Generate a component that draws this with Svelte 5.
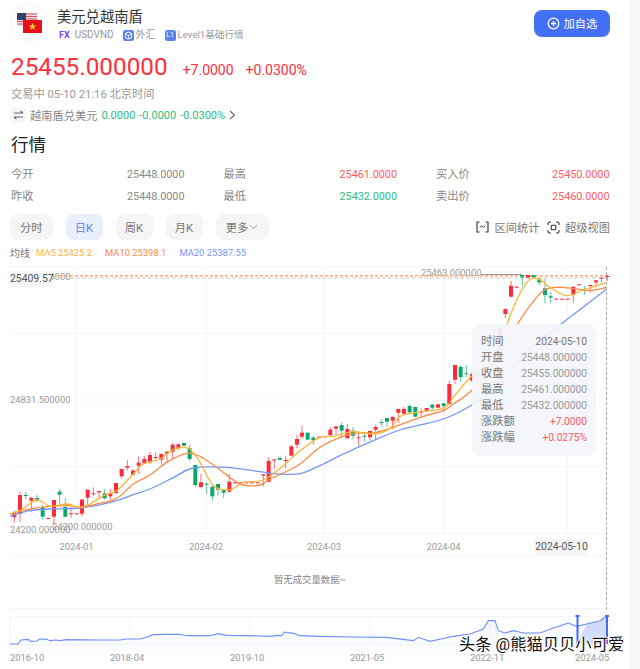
<script>
  const stats = [
    [['今开', '25448.0000', ''], ['最高', '25461.0000', 'up'], ['买入价', '25450.0000', 'up']],
    [['昨收', '25448.0000', ''], ['最低', '25432.0000', 'down'], ['卖出价', '25460.0000', 'up']]
  ]
  const tabs = ['分时', '日K', '周K', '月K']
  const tipRows = [
    ['时间', '2024-05-10', 'dark'],
    ['开盘', '25448.000000', ''],
    ['收盘', '25455.000000', ''],
    ['最高', '25461.000000', ''],
    ['最低', '25432.000000', ''],
    ['涨跌额', '+7.0000', 'up'],
    ['涨跌幅', '+0.0275%', 'up']
  ]

  // crop coordinates (3x) -> page coordinates
  const a = (x, y) => [x / 3, 400 + y / 3]
  const b = (x, y) => [240 + x / 3, 330 + y / 3]
  const c = (x, y) => [430 + x / 3, 260 + y / 3]
  const d = (x, y) => [x / 3, 560 + y / 3]
  const e = (x, y) => [320 + x / 3, 530 + y / 3]

  // x, body top, body bottom, wick top, wick bottom, colour
  const rawA = [
    [43,340,355,335,370,'r'],[60,288,345,278,368,'r'],[77,288,291,278,300,'g'],[94,296,305,295,338,'r'],
    [111,297,304,288,310,'g'],[128,324,353,318,362,'g'],[145,357,358,357,358,'r'],[162,303,353,303,378,'r'],
    [179,278,287,270,318,'g'],[196,324,353,297,355,'g'],[213,343,344,325,356,'r'],[230,343,344,343,344,'r'],
    [246,302,344,300,352,'r'],[263,272,296,272,320,'r'],[280,283,285,265,290,'r'],[297,276,280,276,300,'r'],
    [314,283,298,270,302,'g'],[331,283,292,270,302,'r'],[348,252,282,252,285,'r'],[365,210,232,208,238,'r'],
    [382,201,206,183,214,'r'],[399,215,227,210,230,'r'],[416,191,200,172,225,'r'],[433,180,192,170,195,'r'],
    [450,168,190,158,195,'r'],[467,174,177,160,182,'r'],[484,165,182,163,197,'r'],[501,158,164,158,192,'r'],
    [518,137,158,132,178,'r'],[535,136,146,133,152,'r'],[552,132,140,130,142,'g'],[569,148,180,138,185,'g'],
    [586,198,258,198,265,'g'],[603,250,264,225,268,'r'],[620,254,256,250,285,'g'],[637,264,292,258,305,'g'],
    [654,255,272,255,290,'g'],[671,272,281,272,296,'g'],[688,248,278,225,280,'r'],[705,250,251,250,251,'r'],
    [722,250,251,250,251,'r'],[739,250,251,250,251,'r'],[756,250,251,250,251,'r'],[773,250,251,250,251,'r'],
    [790,226,230,226,262,'r'],[806,186,248,175,250,'r'],[823,181,184,181,210,'r'],[840,177,182,172,184,'g'],
    [857,183,186,170,208,'r'],[874,142,170,138,172,'r'],[891,120,137,108,148,'r'],[906,101,113,80,120,'r'],
    [923,101,122,101,122,'g'],[940,116,124,110,138,'g']
  ]
  const rawB = [
    [237,323,325,323,325,'r'],[254,322,324,322,324,'r'],[271,302,318,295,322,'r'],[288,292,299,292,320,'r'],
    [305,288,305,280,328,'g'],[322,300,328,285,328,'r'],[339,305,320,295,332,'g'],[356,325,328,313,350,'r'],
    [373,320,322,310,338,'g'],[390,306,325,305,335,'r'],[407,294,302,287,332,'r'],[424,279,281,270,292,'g'],
    [441,267,278,267,295,'g'],[458,264,275,262,300,'r'],[475,240,251,240,282,'r'],[492,240,254,234,256,'r'],
    [509,231,250,226,256,'g'],[526,234,263,232,265,'g'],[543,248,250,238,265,'r'],[560,237,245,237,247,'r'],
    [577,227,236,225,246,'g'],[594,226,236,224,238,'r'],[611,223,231,223,250,'g'],[628,165,225,155,228,'r'],
    [645,108,152,108,165,'r'],[662,114,144,108,158,'g'],[679,133,134,110,145,'g'],[696,135,155,130,158,'r']
  ]
  const rawC = [
    [143,345,348,330,360,'g'],[209,208,290,208,290,'r'],[226,150,165,148,177,'r'],[243,80,113,65,115,'r'],
    [260,83,85,83,85,'r'],[277,48,55,48,80,'g'],[294,48,56,48,56,'r'],[311,48,55,48,55,'g'],
    [328,60,70,55,78,'g'],[345,88,108,60,133,'g'],[362,112,116,100,133,'g'],[379,119,120,119,120,'r'],
    [396,119,120,119,120,'r'],[413,119,120,119,120,'r'],[430,83,107,83,130,'r'],[447,76,77,76,77,'r'],
    [464,90,94,80,108,'g'],[481,78,80,78,100,'r'],[498,64,70,64,85,'r'],[515,56,58,56,70,'r'],[532,51,54,47,66,'r']
  ]
  const build = (raw, map) => raw.map(([x, bt, bb, wt, wb, col]) => ({
    x: map(x, 0)[0], bt: map(0, bt)[1], bb: map(0, bb)[1], wt: map(0, wt)[1], wb: map(0, wb)[1], col
  }))
  const candles = [...build(rawA, a), ...build(rawB, b), ...build(rawC, c)]

  const ma5 = [
    ...[[30,345],[60,335],[110,303],[150,322],[200,315],[240,325],[270,315],[310,290],[350,275],[400,225],[430,195],[480,180],[520,152],[565,148],[600,190],[640,260],[690,272],[730,250],[790,243],[850,200],[900,155],[960,115]].map(p => a(...p)),
    ...[[280,322],[340,308],[400,315],[450,298],[480,262],[530,250],[610,238],[640,205],[696,140]].map(p => b(...p)),
    ...[[200,300],[240,170],[290,70],[325,60],[360,85],[410,110],[460,93],[530,70]].map(p => c(...p))
  ]
  const ma10 = [
    ...[[30,345],[100,328],[200,320],[240,325],[290,315],[350,298],[400,255],[450,228],[500,190],[560,163],[600,172],[650,205],[700,243],[730,258],[780,258],[810,240],[850,222],[900,195],[960,145]].map(p => a(...p)),
    ...[[300,325],[350,312],[400,312],[450,298],[500,280],[550,262],[610,245],[640,225],[696,183]].map(p => b(...p)),
    ...[[200,300],[250,215],[300,140],[340,95],[380,85],[430,88],[480,95],[530,85]].map(p => c(...p))
  ]
  const ma20 = [
    ...[[30,352],[90,335],[150,330],[240,327],[340,308],[400,287],[450,270],[520,236],[580,207],[680,205],[780,218],[840,225],[900,224],[960,200]].map(p => a(...p)),
    ...[[300,380],[400,335],[480,303],[610,270],[696,228]].map(p => b(...p)),
    ...[[200,385],[300,270],[400,190],[530,90]].map(p => c(...p))
  ]
  const mini = [
    ...[[30,255],[55,255],[62,243],[85,241],[92,247],[110,246],[120,240],[140,241],[150,245],[165,243],[180,245],[200,242],[300,243],[360,243],[380,240],[420,240],[440,235],[458,227],[500,226],[540,226],[560,230],[630,230],[655,224],[680,229],[750,230],[810,232],[830,229],[845,230],[853,219],[880,223],[900,230],[960,232]].map(p => d(...p)),
    ...[[100,324],[200,325],[280,335],[295,325],[330,337],[400,322],[450,315],[490,300],[505,275],[525,275],[535,305],[555,312],[580,305],[610,312],[660,312],[700,297],[745,282],[770,292],[800,285],[840,275],[860,262]].map(p => e(...p))
  ]

  // catmull-rom through the points
  const smooth = (pts) => {
    let s = `M${pts[0][0]} ${pts[0][1]}`
    for (let i = 0; i < pts.length - 1; i++) {
      const p0 = pts[i - 1] || pts[i], p1 = pts[i], p2 = pts[i + 1], p3 = pts[i + 2] || p2
      s += `C${p1[0] + (p2[0] - p0[0]) / 6} ${p1[1] + (p2[1] - p0[1]) / 6} ${p2[0] - (p3[0] - p1[0]) / 6} ${p2[1] - (p3[1] - p1[1]) / 6} ${p2[0]} ${p2[1]}`
    }
    return s
  }
  const miniLine = mini.map(p => p.join(' ')).join('L')
  const brushLine = mini.filter(p => p[0] >= 577).map(p => p.join(' ')).join('L')

  const vGrid = [76.5, 206, 324, 443.5, 567]
  const hGrid = [268, 334.5, 401, 467.5, 534.5]
  const dateTicks = [[76.5, '2024-01'], [206, '2024-02'], [324, '2024-03'], [443.5, '2024-04']]
  const miniGrid = [10, 130, 250, 370, 490]
  const miniTicks = [[10, '2016-10'], [110, '2018-04'], [230, '2019-10'], [350, '2021-05'], [470, '2022-11'], [575, '2024-05']]
</script>

<div class="page">
  <main>
    <section class="head">
      <div class="logo">
        <svg width="38" height="38" viewBox="0 0 38 38">
          <rect x="7" y="9" width="20" height="13" fill="#e9dfe2" />
          <path d="M7 10h20M7 12.5h20M7 15h20M7 17.5h20M7 20h20" stroke="#d8505a" stroke-width="1.2" />
          <rect x="7" y="9" width="9" height="7" fill="#33406f" />
          <rect x="13" y="16" width="19" height="13" fill="#e8111b" />
          <polygon points="22.5,18.6 23.4,21.4 26.2,21.4 24,23.1 24.8,25.8 22.5,24.2 20.2,25.8 21,23.1 18.8,21.4 21.6,21.4" fill="#ffe21a" />
        </svg>
      </div>
      <div class="names">
        <h1>美元兑越南盾</h1>
        <div class="tags">
          <span class="fx">FX</span><span>USDVND</span>
          <svg class="ic" width="11" height="11" viewBox="0 0 11 11"><rect width="11" height="11" rx="2.5" fill="#5b82ea" /><circle cx="5.5" cy="5.5" r="3.4" fill="none" stroke="#fff" stroke-width="1" /><path d="M2.5 4l3 1.5 3-1.5M5.5 5.5v3" stroke="#fff" stroke-width=".8" fill="none" /></svg>
          <span>外汇</span>
          <span class="lv">L1</span><span class="lvl">Level1基础行情</span>
        </div>
      </div>
      <button class="add">
        <svg width="13" height="13" viewBox="0 0 13 13"><circle cx="6.5" cy="6.5" r="5.3" fill="none" stroke="#fff" stroke-width="1.3" /><path d="M4 6.5h5M6.5 4v5" stroke="#fff" stroke-width="1.3" /></svg>
        加自选
      </button>
    </section>

    <section class="price">
      <span class="last">25455.000000</span>
      <span class="chg">+7.0000</span>
      <span class="chg">+0.0300%</span>
    </section>
    <div class="status">交易中 05-10 21:16 北京时间</div>
    <div class="rev">
      <span class="swap">
        <svg width="11" height="10" viewBox="0 0 11 10"><path d="M1 3h9M7.5 .8L10 3M10 7H1M3.5 9.2L1 7" fill="none" stroke="#666" stroke-width="1.1" /></svg>
      </span>
      <span>越南盾兑美元</span>
      <span class="green">0.0000</span>
      <span class="green">-0.0000</span>
      <span class="green">-0.0300%</span>
      <svg width="7" height="10" viewBox="0 0 7 10"><path d="M1 1l4.5 4L1 9" fill="none" stroke="#666" stroke-width="1.1" /></svg>
    </div>

    <h2>行情</h2>
    <div class="stats">
      {#each stats as row}
        {#each row as cell}
          <div class="cell">
            <span>{cell[0]}</span>
            <span class="num {cell[2]}">{cell[1]}</span>
          </div>
        {/each}
      {/each}
    </div>

    <div class="bar">
      {#each tabs as tab, i}
        <button class="tab" class:wide={i === 0} class:on={i === 1}>{tab}</button>
      {/each}
      <button class="tab more">更多<svg width="9" height="6" viewBox="0 0 9 6"><path d="M.7 1l3.8 3.6L8.3 1" fill="none" stroke="#999" stroke-width=".9" /></svg></button>
      <div class="tools">
        <svg width="13" height="12" viewBox="0 0 13 12"><path d="M3.5 1H1v10h2.5M9.5 1H12v10H9.5" fill="none" stroke="#333" stroke-width="1.1" /><path d="M4 6.5c1-2 1.8-2 2.5-1s1.5 1 2.5-.8" fill="none" stroke="#333" stroke-width="1" /></svg>
        <span>区间统计</span>
        <svg class="scope" width="13" height="13" viewBox="0 0 13 13"><path d="M1 4V2.5A1.5 1.5 0 0 1 2.5 1H4M9 1h1.5A1.5 1.5 0 0 1 12 2.5V4M12 9v1.5a1.5 1.5 0 0 1-1.5 1.5H9M4 12H2.5A1.5 1.5 0 0 1 1 10.5V9" fill="none" stroke="#333" stroke-width="1.1" /><rect x="4.2" y="4.2" width="4.6" height="4.6" rx="1" fill="none" stroke="#333" stroke-width="1.1" /></svg>
        <span>超级视图</span>
      </div>
    </div>

    <div class="legend">
      <span>均线</span>
      <span class="m5">MA5 25425.2</span>
      <span class="m10">MA10 25398.1</span>
      <span class="m20">MA20 25387.55</span>
    </div>

    <div class="chart">
      <svg width="629" height="404" viewBox="0 265 629 404">
        <defs>
          <linearGradient id="fade" x1="0" y1="0" x2="0" y2="1">
            <stop offset="0" stop-color="#5c7ff5" stop-opacity=".07" />
            <stop offset="1" stop-color="#5c7ff5" stop-opacity="0" />
          </linearGradient>
        </defs>

        {#each hGrid as y}
          <line x1="10" x2="610" y1={y} y2={y} class="grid" />
        {/each}
        {#each vGrid as x}
          <line x1={x} x2={x} y1="268" y2="534" class="grid" />
        {/each}
        <line x1="10" x2="610" y1="556.5" y2="556.5" class="grid" />
        <line x1="10" x2="610" y1="609.5" y2="609.5" class="grid" />

        <text x="10" y="280.5" class="axis">25463.000000</text>
        <text x="10" y="403.5" class="axis">24831.500000</text>
        <text x="10" y="533.5" class="axis">24200.000000</text>
        <text x="52" y="530.5" class="axis">24200.000000</text>
        <text x="421" y="277" class="axis">25463.000000</text>
        <line x1="481" x2="522" y1="275.5" y2="275.5" stroke="#999" />

        <line x1="10" x2="608" y1="279" y2="279" stroke="#ccc" stroke-dasharray="4 2" />
        <line x1="10" x2="608" y1="276.7" y2="276.7" stroke="#ffab76" stroke-width="1.5" stroke-dasharray="3 2" />

        {#each candles as k}
          <line x1={k.x} x2={k.x} y1={k.wt} y2={k.wb} class="wick {k.col}" />
          <rect x={k.x - 2} y={k.bt} width="4" height={Math.max(k.bb - k.bt, 1)} class="body {k.col}" />
        {/each}

        <path d={smooth(ma20)} class="ma" stroke="#7496fb" />
        <path d={smooth(ma10)} class="ma" stroke="#fc8c47" />
        <path d={smooth(ma5)} class="ma" stroke="#ffb53a" />

        <line x1="606.5" x2="606.5" y1="268" y2="612" stroke="#aaa" stroke-dasharray="3 2" />

        {#each dateTicks as t}
          <text x={t[0]} y="550.5" text-anchor="middle" class="axis">{t[1]}</text>
        {/each}

        <text x="310" y="584" text-anchor="middle" class="empty">暂无成交量数据~</text>

        <rect x="10" y="617.5" width="600" height="28" class="grid" fill="none" />
        {#each miniGrid as x}
          <line x1={x} x2={x} y1="617" y2="645" class="grid" />
        {/each}
        <path d="M{miniLine}L607 661L10 661Z" fill="url(#fade)" />
        <path d="M{brushLine}L607 645L577 645Z" fill="#5c7ff5" fill-opacity=".24" />
        <path d="M{miniLine}" fill="none" stroke="#6d8ff8" stroke-width="1.1" />
        <path d="M577.5 616.5V645M607 616.5V645" stroke="#3f6df2" stroke-width="2" />
        <path d="M575.5 617h4M605 617h4" stroke="#3f6df2" stroke-width="2" />
        {#each miniTicks as t}
          <text x={t[0]} y="661.5" class="axis">{t[1]}</text>
        {/each}
      </svg>

      <div class="y-tag">25409.57</div>
      <div class="x-tag">2024-05-10</div>

      <div class="tip">
        {#each tipRows as r}
          <div class="tip-row">
            <span>{r[0]}</span>
            <span class="val {r[2]}">{r[1]}</span>
          </div>
        {/each}
      </div>

      <div class="mark">头条 @熊猫贝贝小可爱</div>
    </div>
  </main>
  <aside></aside>
</div>

<style>
  :global(body) {
    margin: 0;
    background: #fff;
  }

  .page {
    display: flex;
    width: 640px;
    height: 669px;
    overflow: hidden;
    font-family: Roboto, "Noto Sans CJK SC", sans-serif;
    font-size: 11.25px;
    color: #888;
  }

  main {
    width: 629px;
    flex: none;
  }

  aside {
    flex: 1;
    background: #f8f8f8;
  }

  .head {
    display: flex;
    height: 46px;
    padding: 4px 19px 0 10px;
    box-sizing: border-box;
  }

  .logo {
    width: 38px;
    height: 38px;
    border-radius: 50%;
    box-shadow: inset 0 0 0 1px #f5f5f5;
    flex: none;
  }

  .logo svg {
    display: block;
  }

  .names {
    margin-left: 9px;
    flex: 1;
  }

  h1 {
    margin: 3px 0 0;
    font-size: 14.3px;
    line-height: 20px;
    font-weight: 400;
    color: #333;
  }

  .tags {
    display: flex;
    align-items: center;
    margin-top: 1px;
    font-size: 10px;
    line-height: 14px;
    color: #999;
  }

  .fx {
    color: #7d3cf0;
    font-weight: 700;
    margin: 0 5px 0 2px;
    font-size: 9px;
  }

  .ic {
    margin: 0 2px 0 9px;
  }

  .lv {
    width: 11px;
    height: 11px;
    line-height: 11px;
    border-radius: 2.5px;
    background: #5b82ea;
    color: #fff;
    font-size: 7px;
    text-align: center;
    margin: 0 2px 0 9px;
  }

  .lvl {
    font-size: 9.6px;
  }

  .add {
    display: flex;
    align-items: center;
    justify-content: center;
    gap: 4px;
    width: 76px;
    height: 26.5px;
    margin-top: 6px;
    border: 0;
    padding: 0;
    border-radius: 8px;
    background: #4470f5;
    color: #fff;
    font: inherit;
  }

  .price {
    display: flex;
    align-items: baseline;
    height: 34px;
    padding-left: 11px;
    margin-top: 4px;
    color: #ff2f3c;
  }

  .last {
    font-size: 24.3px;
    line-height: 34px;
    margin-right: 15px;
  }

  .chg {
    font-size: 14px;
    margin-right: 12px;
  }

  .status {
    margin: 3px 0 0 11px;
    line-height: 16px;
    color: #999;
  }

  .rev {
    display: flex;
    align-items: center;
    gap: 4px;
    height: 16px;
    margin: 4px 0 0 10px;
  }

  .swap {
    display: flex;
    align-items: center;
    justify-content: center;
    width: 16px;
    height: 16px;
    border-radius: 5px;
    background: #f5f5f5;
  }

  .green {
    color: #2ebd85;
    font-size: 11px;
  }

  h2 {
    margin: 10px 0 0 11px;
    font-size: 17.5px;
    line-height: 24px;
    font-weight: 400;
    color: #222;
  }

  .stats {
    display: grid;
    grid-template-columns: repeat(3, 173.5px);
    gap: 6px 39px;
    margin: 10px 0 0 11px;
  }

  .cell {
    display: flex;
    justify-content: space-between;
    line-height: 16px;
  }

  .num {
    font-size: 10.8px;
  }

  .up {
    color: #ff5a62;
  }

  .down {
    color: #2ebd85;
  }

  .bar {
    display: flex;
    align-items: center;
    height: 26px;
    padding: 0 19px 0 10px;
    margin-top: 9px;
  }

  .tab {
    width: 37px;
    height: 26px;
    margin-right: 13px;
    padding: 0;
    border: 0;
    border-radius: 8px;
    background: #f5f5f5;
    color: #777;
    font: inherit;
  }

  .wide {
    width: 42.5px;
  }

  .on {
    background: #eaeffe;
    color: #5b82f0;
  }

  .more {
    display: flex;
    align-items: center;
    justify-content: center;
    width: 53px;
    margin-right: 0;
    gap: 1px;
  }

  .tools {
    display: flex;
    align-items: center;
    margin-left: auto;
    color: #777;
  }

  .tools span {
    margin-left: 5px;
  }

  .scope {
    margin-left: 7.5px;
  }

  .legend {
    display: flex;
    align-items: center;
    height: 14px;
    margin: 5px 0 0 10px;
    font-size: 9.4px;
    color: #777;
    white-space: nowrap;
  }

  .legend span:first-child {
    font-size: 10px;
  }

  .m5 {
    margin-left: 6px;
    color: #ffb53a;
  }

  .m10 {
    margin-left: 13px;
    color: #fc8c47;
  }

  .m20 {
    margin-left: 13px;
    color: #7496fb;
  }

  .chart {
    position: relative;
    height: 404px;
    margin-top: 5px;
  }

  .chart svg {
    display: block;
  }

  .grid {
    stroke: #f5f5f5;
  }

  .axis {
    font-size: 9.4px;
    fill: #999;
  }

  .empty {
    font-size: 9.4px;
    fill: #888;
  }

  .wick {
    stroke-width: 1;
  }

  .wick.r {
    stroke: #ff6b72;
  }

  .wick.g {
    stroke: #5cc79a;
  }

  .body.r {
    fill: #fd2b3a;
  }

  .body.g {
    fill: #0aa86a;
  }

  .ma {
    fill: none;
    stroke-width: 1.3;
  }

  .y-tag {
    position: absolute;
    left: 10px;
    top: 7px;
    width: 42px;
    height: 16px;
    line-height: 16px;
    background: #f5f5f5;
    border-radius: 3px;
    color: #555;
    font-size: 10.4px;
    white-space: nowrap;
  }

  .x-tag {
    position: absolute;
    left: 535px;
    top: 275px;
    width: 53px;
    height: 16px;
    line-height: 16px;
    background: #f5f5f5;
    border-radius: 4px;
    color: #555;
    font-size: 10.4px;
    text-align: center;
    white-space: nowrap;
  }

  .tip {
    position: absolute;
    left: 472px;
    top: 60px;
    width: 124px;
    height: 132px;
    padding: 10px 9px;
    box-sizing: border-box;
    background: rgba(243, 245, 251, 0.93);
    border-radius: 8px;
  }

  .tip-row {
    display: flex;
    justify-content: space-between;
    height: 16px;
    line-height: 16px;
    color: #777;
  }

  .val {
    color: #999;
    font-size: 10.2px;
  }

  .val.dark {
    color: #777;
  }

  .val.up {
    color: #ff5a62;
  }

  .mark {
    position: absolute;
    left: 459px;
    top: 370px;
    font-size: 16.3px;
    line-height: 22px;
    color: #111;
    white-space: nowrap;
    text-shadow: 1px 0 0 #fff, -1px 0 0 #fff, 0 1px 0 #fff, 0 -1px 0 #fff;
  }
</style>
